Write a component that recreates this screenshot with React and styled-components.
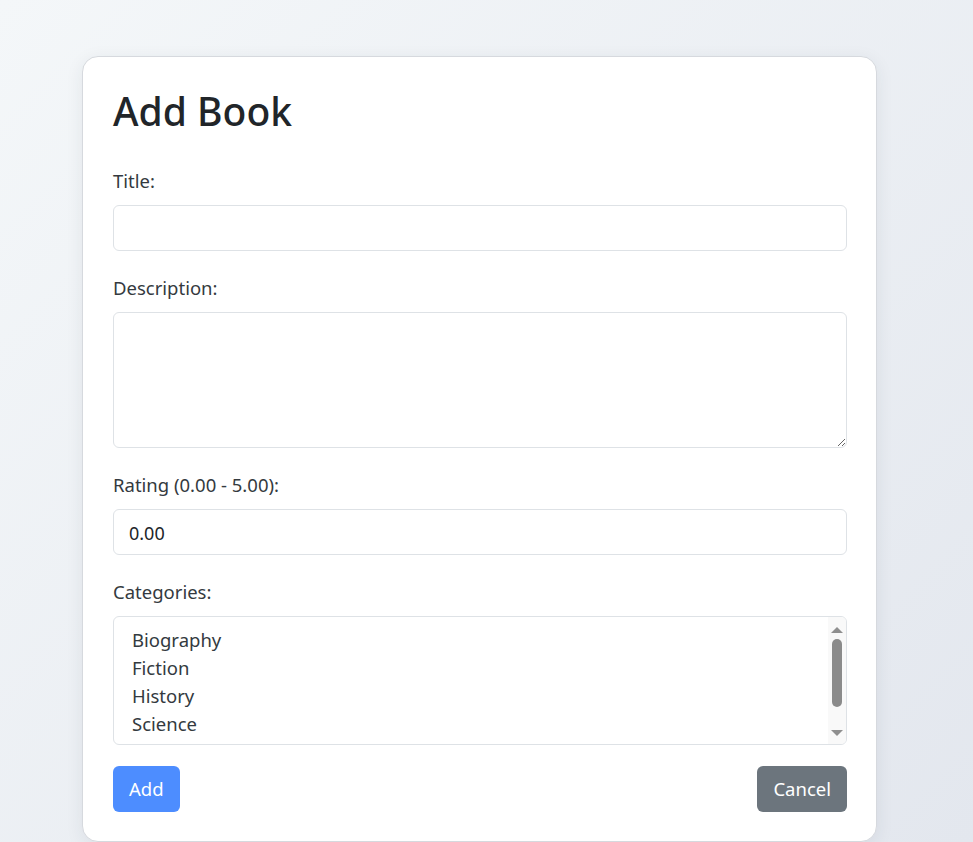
import React from "react";
import styled, { createGlobalStyle } from "styled-components";

const GlobalStyle = createGlobalStyle`
    html, body {
        margin: 0;
        height: 100%;
        overflow: hidden;
    }
    body {
        font-family: "Noto Sans", "Open Sans", sans-serif;
        background: linear-gradient(135deg, #f4f7f9 0%, #e3e7ee 100%);
        color: #333a40;
    }
`

const Page = styled.div`
    min-height: 100vh;
    padding: 56px 0 0 82px;
    box-sizing: border-box;
`

const Card = styled.div`
    width: 795px;
    box-sizing: border-box;
    background: #fff;
    border: 1px solid #d6d9de;
    border-radius: 16px;
    padding: 31px 29px 29px 30px;
    box-shadow: 0 4px 18px rgba(40, 50, 70, 0.08);
`

const Heading = styled.h1`
    margin: 0 0 32px;
    font-size: 39px;
    font-weight: 500;
    line-height: 1.2;
    color: #212529;
`

const Field = styled.div`
    margin-bottom: 23px;
`

const Label = styled.label`
    display: block;
    font-size: 18.5px;
    line-height: 27px;
    margin-bottom: 11px;
    color: #343a40;
`

const inputBase = `
    display: block;
    width: 100%;
    box-sizing: border-box;
    border: 1px solid #dee2e6;
    border-radius: 6px;
    font-family: "Noto Sans", "Open Sans", sans-serif;
    font-size: 18px;
    color: #212529;
    background: #fff;
    outline: none;
`

const Input = styled.input`
    ${inputBase}
    height: 46px;
    padding: 11px 15px 9px;
    line-height: 24px;
`

const TextArea = styled.textarea`
    ${inputBase}
    height: 136px;
    padding: 10px 15px;
    line-height: 24px;
    resize: vertical;
`

const ListBox = styled.div`
    display: flex;
    height: 129px;
    box-sizing: border-box;
    border: 1px solid #dee2e6;
    border-radius: 6px;
    overflow: hidden;
    background: #fff;
`

const Options = styled.ul`
    flex: 1;
    margin: 0;
    padding: 9px 0 0 18px;
    list-style: none;
`

const OptionItem = styled.li`
    font-size: 18.5px;
    line-height: 28px;
    color: #333a40;
    cursor: default;
`

const ScrollTrack = styled.div`
    width: 18px;
    display: flex;
    flex-direction: column;
    align-items: center;
    padding: 10px 0 8px;
    box-sizing: border-box;
    background: #f9f9f9;
`

const Arrow = styled.span`
    width: 0;
    height: 0;
    border-left: 6px solid transparent;
    border-right: 6px solid transparent;
    ${props => props.$down
        ? 'border-top: 6px solid #8f8f8f; margin-top: auto;'
        : 'border-bottom: 6px solid #8f8f8f;'}
`

const Thumb = styled.span`
    width: 10px;
    height: 68px;
    margin-top: 6px;
    border-radius: 5px;
    background: #8b8b8b;
`

const Actions = styled.div`
    display: flex;
    justify-content: space-between;
    margin-top: 21px;
`

const Button = styled.button`
    height: 46px;
    padding: 0 16px;
    border: none;
    border-radius: 6px;
    font-family: "Noto Sans", "Open Sans", sans-serif;
    font-size: 18.5px;
    color: #fff;
    background: ${props => props.$variant === 'secondary' ? '#6c757d' : '#4d8dff'};
    cursor: pointer;
`

const categories = ['Biography', 'Fiction', 'History', 'Science']

const App = () => {
    return (
        <>
            <GlobalStyle />
            <Page>
                <Card>
                    <Heading>Add Book</Heading>
                    <form onSubmit={e => e.preventDefault()}>
                        <Field>
                            <Label htmlFor="title">Title:</Label>
                            <Input id="title" type="text" />
                        </Field>
                        <Field>
                            <Label htmlFor="description">Description:</Label>
                            <TextArea id="description" />
                        </Field>
                        <Field>
                            <Label htmlFor="rating">Rating (0.00 - 5.00):</Label>
                            <Input id="rating" type="text" defaultValue="0.00" />
                        </Field>
                        <div>
                            <Label>Categories:</Label>
                            <ListBox role="listbox" aria-multiselectable="true">
                                <Options>
                                    {categories.map(c => (
                                        <OptionItem key={c} role="option">{c}</OptionItem>
                                    ))}
                                </Options>
                                <ScrollTrack>
                                    <Arrow />
                                    <Thumb />
                                    <Arrow $down />
                                </ScrollTrack>
                            </ListBox>
                        </div>
                        <Actions>
                            <Button type="submit">Add</Button>
                            <Button type="button" $variant="secondary">Cancel</Button>
                        </Actions>
                    </form>
                </Card>
            </Page>
        </>
    )
}

export default App
